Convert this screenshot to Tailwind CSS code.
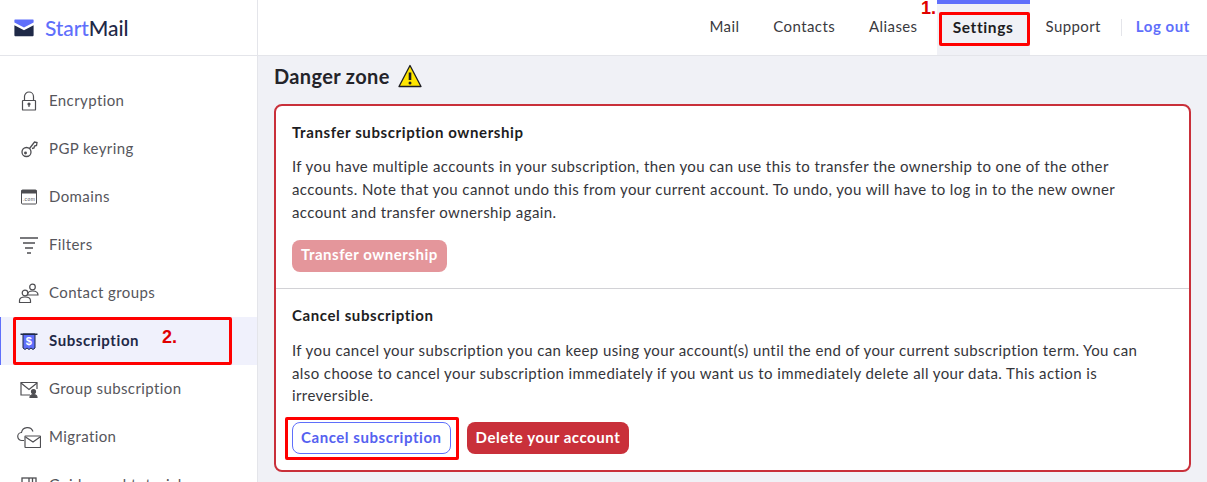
<!DOCTYPE html>
<html lang="en">
<head>
    <meta charset="UTF-8">
    <script src="https://cdn.jsdelivr.net/npm/@tailwindcss/browser@4"></script>
    <title>StartMail Settings</title>
</head>
<body class="relative h-[482px] w-[1207px] overflow-hidden bg-[#f0f1f6] font-['Lato','Noto_Sans',sans-serif] text-[15px] text-[#1d1d22]">
    <div class="flex h-full">
        <!-- sidebar -->
        <aside class="h-full w-[258px] shrink-0 overflow-hidden border-r border-[#e4e5ea] bg-white">
            <div class="flex h-[56px] items-center gap-[11px] border-b border-[#e4e5ea] pl-[14px]">
                <svg width="20" height="20" viewBox="0 0 20 20"><path d="M1 1.500h18a.6.6 0 0 1 .6.6v2.400L10 9.600.4 4.500V2.100a.6.6 0 0 1 .6-.6z" fill="#5f6ffb"/><path d="M.4 7.200 10 12.300l9.600-5.100v10.100a.9.9 0 0 1-.9.9H1.300a.9.9 0 0 1-.9-.9z" fill="#1f2947"/></svg>
                <span class="text-[21px] leading-none font-medium tracking-[-.1px] text-[#1f2947]"><span class="text-[#5f6ffb]">Start</span>Mail</span>
            </div>
            <nav class="h-[426px] overflow-hidden pt-[21px] tracking-[.4px] text-[#56565c]">
                <a class="flex h-[48px] items-center gap-[11px] pl-[20px]">
                    <svg width="18" height="20" viewBox="0 0 18 20" fill="none" stroke="#4e4e52" stroke-width="1.200"><rect x="2.500" y="9.500" width="13" height="9.500" rx=".6"/><path d="M4.500 9.500V5.500a4.500 4.500 0 0 1 9 0v4"/><circle cx="9" cy="13" r="1" fill="#4e4e52"/><path d="M9 13v3"/></svg>
                    <span class="mb-[2px]">Encryption</span>
                </a>
                <a class="flex h-[48px] items-center gap-[11px] pl-[20px]">
                    <svg width="18" height="18" viewBox="0 0 18 18" fill="none" stroke="#4e4e52" stroke-width="1.300"><circle cx="6.500" cy="12" r="4.500"/><circle cx="5.500" cy="13" r=".8" fill="#4e4e52"/><path d="M9.500 8.500 14.500 2l2.500.5-.5 3-2 .5-.5 2-2 .5"/></svg>
                    <span class="mb-[2px]">PGP keyring</span>
                </a>
                <a class="flex h-[48px] items-center gap-[11px] pl-[20px]">
                    <svg width="18" height="18" viewBox="0 0 18 18"><rect x="1.500" y="2" width="15" height="14" rx="1" fill="#fff" stroke="#4e4e52" stroke-width="1"/><rect x="1.500" y="2" width="15" height="3.500" fill="#4e4e52"/><text x="9" y="12.500" font-size="5" text-anchor="middle" fill="#4e4e52" font-family="Liberation Sans">.com</text></svg>
                    <span class="mb-[2px]">Domains</span>
                </a>
                <a class="flex h-[48px] items-center gap-[11px] pl-[20px]">
                    <svg width="18" height="18" viewBox="0 0 18 18" fill="none" stroke="#4e4e52" stroke-width="1.400"><path d="M0 2h18M3 7h12M5 12h8M7 17h4"/></svg>
                    <span class="mb-[2px]">Filters</span>
                </a>
                <a class="flex h-[48px] items-center gap-[9px] pl-[18px]">
                    <svg width="22" height="22" viewBox="0 0 22 22" fill="none" stroke="#4e4e52" stroke-width="1.200"><circle cx="14.500" cy="5" r="2.800"/><path d="M9.500 13c0-2.500 2-4 5-4s5.500 1.500 5.500 4z" fill="#fff"/><circle cx="7" cy="11" r="2.800" fill="#fff"/><path d="M1.500 20.500v-2c0-2 2-3.500 5.500-3.500s5.500 1.500 5.500 3.500v2z" fill="#fff"/></svg>
                    <span class="mb-[2px]">Contact groups</span>
                </a>
                <a class="flex h-[48px] items-center gap-[11px] border-l-[1px] border-[#5f6ffb] bg-[#f0f1fc] pl-[19px] font-bold tracking-[.58px] text-[#1f2947]">
                    <svg width="18" height="20" viewBox="0 0 18 20"><path d="M3 3h12v14l-2 1.500-2-1.500-2 1.500L7 17l-2 1.500L3 17z" fill="#5f6ffb" stroke="#1f2947" stroke-width="1"/><path d="M.5 2.500h17v1.500H.5z" fill="#1f2947"/><text x="9" y="14" font-size="11" font-weight="700" text-anchor="middle" fill="#fff" font-family="Liberation Sans">$</text></svg>
                    <span class="mb-[2px]">Subscription</span>
                </a>
                <a class="flex h-[48px] items-center gap-[11px] pl-[20px]">
                    <svg width="18" height="18" viewBox="0 0 18 18" fill="none" stroke="#4e4e52" stroke-width="1.200"><path d="M10 15H1V2.500h16V9"/><path d="m1 3 8 6.500L17 3"/><circle cx="13.500" cy="11.500" r="2" fill="#4e4e52"/><path d="M10 17.500c0-2 1.500-3 3.500-3s3.500 1 3.500 3z" fill="#4e4e52"/></svg>
                    <span class="mb-[2px]">Group subscription</span>
                </a>
                <a class="flex h-[48px] items-center gap-[8px] pl-[17px]">
                    <svg width="24" height="24" viewBox="0 0 24 24" fill="none" stroke="#4e4e52" stroke-width="1.200"><path d="M7 15.500H5a4 4 0 0 1-.5-8A6 6 0 0 1 16 6.500"/><rect x="8" y="11" width="15.500" height="11.500" rx=".5" fill="#fff"/><path d="m8.500 12 7.500 5 7-5"/></svg>
                    <span class="mb-[2px]">Migration</span>
                </a>
                <a class="flex h-[48px] items-center gap-[11px] pl-[20px]">
                    <svg width="18" height="18" viewBox="0 0 18 18" fill="none" stroke="#4e4e52" stroke-width="1.300"><rect x="2" y="2" width="14" height="14"/><path d="M9 2v14M12.500 2v7"/></svg>
                    <span class="mb-[2px]">Guides and tutorials</span>
                </a>
            </nav>
        </aside>

        <div class="min-w-0 flex-1">
            <!-- top bar -->
            <header class="flex h-[56px] justify-end border-b border-[#e4e5ea] bg-white pr-[17px] tracking-[.4px] text-[#3a3a40]">
                <a class="flex items-center pb-[2px] pr-[34px]">Mail</a>
                <a class="flex items-center pb-[2px] pr-[34px]">Contacts</a>
                <a class="flex items-center pb-[2px] pr-[19px]">Aliases</a>
                <a class="flex w-[93px] items-center justify-center border-t-4 border-[#5f6ffb] bg-[#f0f1f6] pb-[4px] text-[15.500px] font-bold tracking-[.6px] text-[#1d1d22]">Settings</a>
                <a class="flex items-center pb-[2px] pl-[16px] pr-[20px]">Support</a>
                <span class="my-[19px] w-px bg-[#e4e5ea]"></span>
                <a class="flex items-center pb-[2px] pl-[14px] font-bold tracking-[.57px] text-[#5f6ffb]">Log out</a>
            </header>

            <main class="pl-[16px] pr-[16px]">
                <h2 class="flex h-[42px] items-center gap-[8px] pb-[2px] text-[20px] font-bold tracking-[.35px] text-[#24242a]">
                    Danger zone
                    <svg width="24" height="24" viewBox="0 0 24 24"><path d="M12 1.500 23 22.500H1z" fill="#ffe600" stroke="#1d1d22" stroke-width="1.300" stroke-linejoin="round"/><path d="M12 8.500v7.500" stroke="#1d1d22" stroke-width="2.600"/><circle cx="12" cy="19" r="1.500" fill="#1d1d22"/></svg>
                </h2>
                <section class="mt-[6px] h-[368px] w-[917px] rounded-[8px] border-2 border-[#c9303a] bg-white">
                    <div class="h-[183px] border-b border-[#d2d2d6] px-[16px] pt-[15px]">
                        <h3 class="text-[15px] leading-[23px] font-bold tracking-[.6px]">Transfer subscription ownership</h3>
                        <p class="mt-[11px] leading-[23px] tracking-[.4px] text-[#35353a]">If you have multiple accounts in your subscription, then you can use this to transfer the ownership to one of the other<br>accounts. Note that you cannot undo this from your current account. To undo, you will have to log in to the new owner<br>account and transfer ownership again.</p>
                        <button class="mt-[16px] flex h-[32px] items-center rounded-[8px] bg-[#e4969b] px-[9px] pb-[3px] font-bold tracking-[.5px] text-white">Transfer ownership</button>
                    </div>
                    <div class="px-[16px] pt-[15px]">
                        <h3 class="text-[15px] leading-[23px] font-bold tracking-[.6px]">Cancel subscription</h3>
                        <p class="mt-[12px] leading-[22.500px] tracking-[.4px] text-[#35353a]">If you cancel your subscription you can keep using your account(s) until the end of your current subscription term. You can<br>also choose to cancel your subscription immediately if you want us to immediately delete all your data. This action is<br>irreversible.</p>
                        <div class="mt-[15.500px] flex gap-[16px]">
                            <button class="flex h-[32px] items-center rounded-[8px] border border-[#5f6ffb] bg-white px-[8px] pb-[1px] font-bold tracking-[.55px] text-[#5561f0]">Cancel subscription</button>
                            <button class="flex h-[32px] items-center rounded-[8px] bg-[#c9303a] px-[9px] pb-[1px] font-bold tracking-[.55px] text-white">Delete your account</button>
                        </div>
                    </div>
                </section>
            </main>
        </div>
    </div>

    <!-- red annotations over the screenshot -->
    <div class="absolute left-[13px] top-[317px] h-[48px] w-[219px] rounded-[2px] border-[3px] border-[#ff0000]"></div>
    <div class="absolute left-[939px] top-[12px] h-[34px] w-[91px] rounded-[2px] border-[3px] border-[#ff0000]"></div>
    <div class="absolute left-[285px] top-[417px] h-[43px] w-[174px] rounded-[2px] border-[3px] border-[#ff0000]"></div>
    <span class="absolute left-[921px] top-[-5px] font-['Liberation_Sans',sans-serif] text-[18px] font-bold text-[#e00000]">1.</span>
    <span class="absolute left-[162px] top-[324px] font-['Liberation_Sans',sans-serif] text-[18px] font-bold text-[#e00000]">2.</span>
</body>
</html>
